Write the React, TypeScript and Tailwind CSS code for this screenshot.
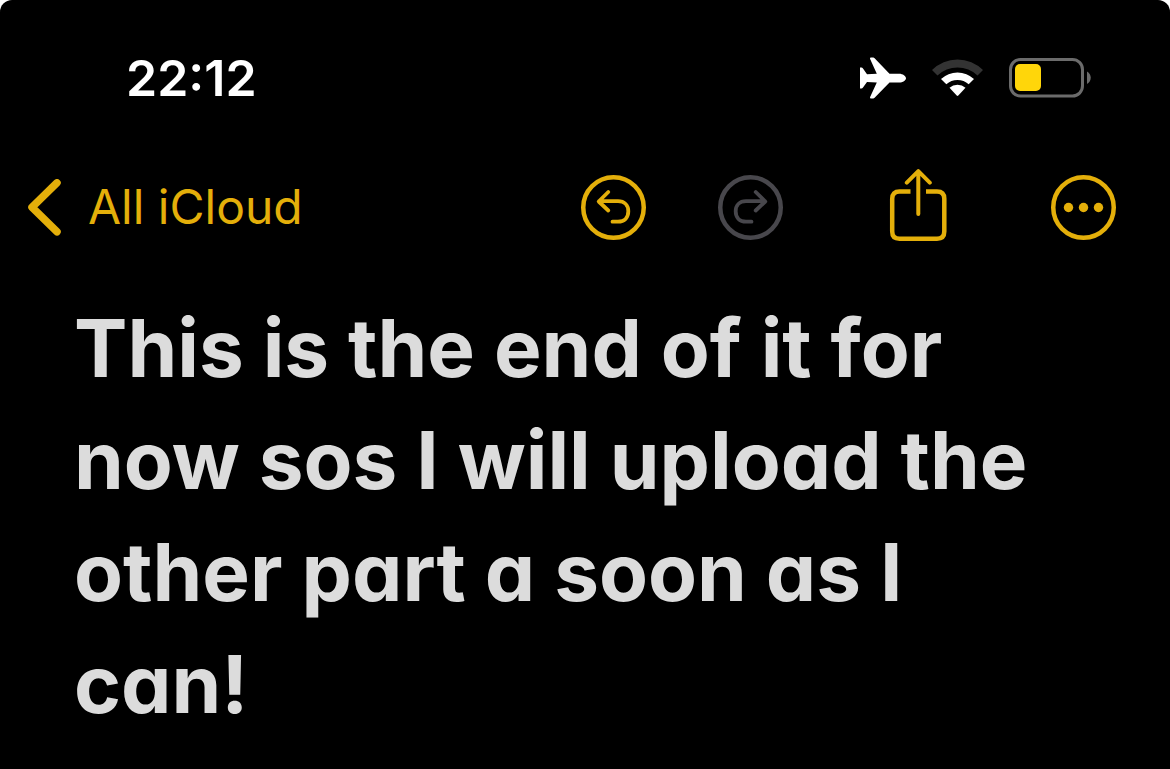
import type { ReactNode } from 'react';

function AirplaneIcon() {
  return (
    <svg width="46" height="42" viewBox="0 0 46 41" fill="#fff" aria-hidden="true">
      <path d="M10 1.2Q9.800 0 11 0H13.200Q14 0 14.600.7L29.500 16.200H39C43 16.200 46 18.600 46 20.700S43 25 39 25H29.500L14.600 40.300Q14 41 13.200 41H11Q9.800 41 10 39.800L16.800 25L7 24.600L2.800 30.200Q2.300 31 1.500 31H0V10H1.500Q2.300 10 2.800 10.800L7 16.800L16.800 16.200Z" />
    </svg>
  );
}

function WifiIcon() {
  return (
    <svg width="51" height="38" viewBox="0 0 51 38" aria-hidden="true">
      <path d="M0 11A36 36 0 0 1 51 11L45.500 16.500A29 29 0 0 0 5.500 16.500Z" fill="#333" />
      <path d="M9 20A24 24 0 0 1 42 20L36.700 25.300A16.500 16.500 0 0 0 14.300 25.300Z" fill="#fff" />
      <path d="M17.500 28.700A12 12 0 0 1 33.500 28.700L26.300 36.500Q25.500 37.300 24.700 36.500Z" fill="#fff" />
    </svg>
  );
}

function BatteryIcon() {
  return (
    <svg width="82" height="40" viewBox="0 0 82 40" fill="none" aria-hidden="true">
      <rect x="1.500" y="1.500" width="72" height="36.500" rx="10" stroke="#6b6b6b" strokeWidth="3" />
      <rect x="6" y="6" width="26" height="27" rx="5" fill="#ffd60a" />
      <path d="M78 13.500C83 16 83 23.500 78 26Z" fill="#6b6b6b" />
    </svg>
  );
}

function ChevronIcon() {
  return (
    <svg width="33" height="57" viewBox="0 0 33 57" fill="none" aria-hidden="true">
      <path d="M29 3.800L4 28.300L29 52.800" stroke="currentColor" strokeWidth="7.500" strokeLinecap="round" strokeLinejoin="round" />
    </svg>
  );
}

function CircleIcon({ children }: { children: ReactNode }) {
  return (
    <svg width="65" height="65" viewBox="0 0 65 65" fill="none" stroke="currentColor" aria-hidden="true">
      <circle cx="32.500" cy="32.500" r="30.250" strokeWidth="4.500" />
      {children}
    </svg>
  );
}

function UndoArrow() {
  return (
    <path
      d="M27.300 17L17.700 26.500L27.300 35.500M18 26.200H37C43.500 26.200 47.300 30.500 47.300 36.300C47.300 42.500 43.500 46.700 37 46.700H31.500"
      strokeWidth="3.800"
      strokeLinecap="round"
      strokeLinejoin="round"
    />
  );
}

function ShareIcon() {
  return (
    <svg width="60" height="76" viewBox="-3 0 60 76" fill="none" stroke="currentColor" aria-hidden="true">
      <path d="M20.500 22.500H9.500Q2.200 22.500 2.200 29.800V62.500Q2.200 69.700 9.500 69.700H47Q54.300 69.700 54.300 62.500V29.800Q54.300 22.500 47 22.500H36" strokeWidth="4.500" />
      <path d="M28.300 45V3M16.800 13.700L28.300 2.200L39.800 13.700" strokeWidth="4" strokeLinecap="round" strokeLinejoin="round" />
    </svg>
  );
}

function StatusBar() {
  return (
    <div className="flex h-[156px] items-center justify-between pr-[79px] pl-[126px]">
      <time className="text-[50px] leading-none font-semibold text-white">22:12</time>
      <div className="flex items-center gap-[26px]">
        <AirplaneIcon />
        <WifiIcon />
        <BatteryIcon />
      </div>
    </div>
  );
}

function NavBar() {
  return (
    <nav className="flex h-[102px] items-center justify-between pr-[54px] pl-7 text-[#e4af0a]">
      <a href="#" className="flex items-center gap-[27px] text-[48px] leading-none">
        <ChevronIcon />
        All iCloud
      </a>
      <div className="flex items-center gap-[104px]">
        <div className="flex items-center gap-[72px]">
          <button type="button" aria-label="Undo">
            <CircleIcon>
              <UndoArrow />
            </CircleIcon>
          </button>
          <button type="button" aria-label="Redo" disabled className="text-[#48474c]">
            <CircleIcon>
              <g transform="matrix(-1 0 0 1 65 0)">
                <UndoArrow />
              </g>
            </CircleIcon>
          </button>
        </div>
        <button type="button" aria-label="Share">
          <ShareIcon />
        </button>
        <button type="button" aria-label="More">
          <CircleIcon>
            <g fill="currentColor" stroke="none">
              <circle cx="17.500" cy="32.500" r="4.700" />
              <circle cx="32.500" cy="32.500" r="4.700" />
              <circle cx="47.500" cy="32.500" r="4.700" />
            </g>
          </CircleIcon>
        </button>
      </div>
    </nav>
  );
}

export default function App() {
  return (
    <div className="min-h-screen bg-white font-['Inter',sans-serif]">
      <div className="min-h-screen rounded-t-xl bg-black">
        <StatusBar />
        <NavBar />
        <main className="pt-[34px] pr-24 pl-[74px]">
          <h1 className="text-[80px] leading-[112px] font-bold text-[#dcdcdc] [font-feature-settings:'cv11']">
            This is the end of it for now sos I will upload the other part a soon as I can!
          </h1>
        </main>
      </div>
    </div>
  );
}
